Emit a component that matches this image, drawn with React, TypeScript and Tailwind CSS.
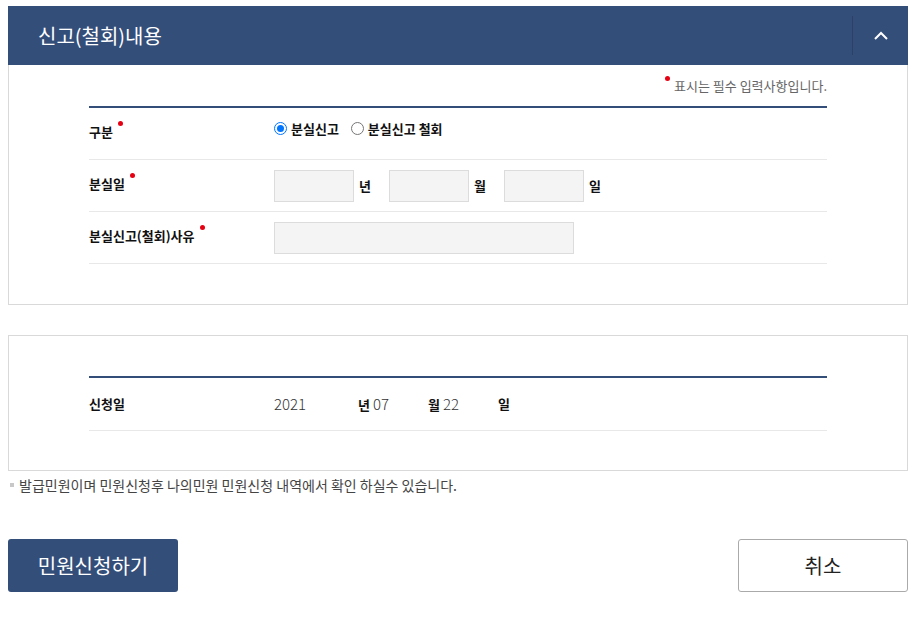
const font = { fontFamily: '"Noto Sans CJK KR", "Noto Sans", sans-serif' }

function Req() {
  return <span className="relative -top-[11px] ml-[5px] inline-block w-[5px] h-[5px] rounded-full bg-[#e60012]" />
}

function Row({ label, children }: { label: string; children: React.ReactNode }) {
  return (
    <div className="flex items-center min-h-[52px] border-b border-[#e8e8e8]">
      <div className="relative -top-[2px] w-[185px] text-[13px] font-bold text-[#111]">
        {label}
        <Req />
      </div>
      <div className="flex items-center">{children}</div>
    </div>
  )
}

function Field({ w }: { w: string }) {
  return <div className={`${w} h-[32px] bg-[#f4f4f4] border border-[#dcdcdc]`} />
}

export default function App() {
  return (
    <div className="bg-white w-[918px] h-[626px] pt-[6px] pl-[8px]" style={font}>
      <div className="w-[900px]">
        <div className="h-[59px] bg-[#344e7a] flex items-center">
          <h2 className="flex-1 pl-[30px] text-[20px] text-white leading-none">신고(철회)내용</h2>
          <div className="w-px h-[39px] bg-[#2b4169]" />
          <div className="w-[55px] flex justify-center">
            <svg width="16" height="10" viewBox="0 0 16 10" fill="none">
              <path d="M2 8 L8 2 L14 8" stroke="white" strokeWidth="2" />
            </svg>
          </div>
        </div>

        <div className="border border-t-0 border-[#d9d9d9] h-[240px] px-[80px]">
          <div className="flex justify-end items-start pt-[11px] h-[41px] text-[13px] text-[#666]">
            <span className="w-[5px] h-[5px] rounded-full bg-[#e60012] mr-[4px]" />
            <span className="leading-none mt-[3px]">표시는 필수 입력사항입니다.</span>
          </div>
          <div className="border-t-2 border-[#344e7a]">
            <Row label="구분">
              <div className="relative -top-[5px] flex items-center">
                <label className="flex items-center gap-[4px] text-[13px] font-bold text-[#111]">
                  <span className="w-[13px] h-[13px] rounded-full border border-[#0075ff] flex items-center justify-center">
                    <span className="w-[7px] h-[7px] rounded-full bg-[#0075ff]" />
                  </span>
                  분실신고
                </label>
                <label className="ml-[12px] flex items-center gap-[4px] text-[13px] font-bold text-[#111]">
                  <span className="w-[13px] h-[13px] rounded-full border border-[#767676]" />
                  분실신고 철회
                </label>
              </div>
            </Row>
            <Row label="분실일">
              <Field w="w-[80px]" />
              <span className="ml-[5px] w-[30px] text-[13px] font-bold text-[#111]">년</span>
              <Field w="w-[80px]" />
              <span className="ml-[5px] w-[30px] text-[13px] font-bold text-[#111]">월</span>
              <Field w="w-[80px]" />
              <span className="ml-[5px] text-[13px] font-bold text-[#111]">일</span>
            </Row>
            <Row label="분실신고(철회)사유">
              <Field w="w-[300px]" />
            </Row>
          </div>
        </div>

        <div className="mt-[30px] border border-[#d9d9d9] h-[136px] px-[80px] pt-[40px]">
          <div className="border-t-2 border-[#344e7a]">
            <div className="flex items-center h-[53px] border-b border-[#e8e8e8] text-[13px] text-[#111]">
              <div className="w-[185px] font-bold">신청일</div>
              <span className="w-[84px] text-[15px] text-[#333] font-light">2021</span>
              <span className="w-[70px]"><b>년</b> <span className="text-[15px] text-[#333] font-light">07</span></span>
              <span className="w-[70px]"><b>월</b> <span className="text-[15px] text-[#333] font-light">22</span></span>
              <b>일</b>
            </div>
          </div>
        </div>

        <p className="mt-[7px] flex items-center text-[14px] text-[#444] leading-none">
          <span className="w-[4px] h-[4px] bg-[#c8c8c8] ml-[2px] mr-[5px]" />
          발급민원이며 민원신청후 나의민원 민원신청 내역에서 확인 하실수 있습니다.
        </p>

        <div className="mt-[47px] flex justify-between">
          <button className="w-[170px] h-[53px] rounded-[3px] bg-[#344e7a] text-white text-[20px]">민원신청하기</button>
          <button className="w-[170px] h-[53px] rounded-[3px] border border-[#aaa] bg-white text-[#222] text-[20px]">취소</button>
        </div>
      </div>
    </div>
  )
}
